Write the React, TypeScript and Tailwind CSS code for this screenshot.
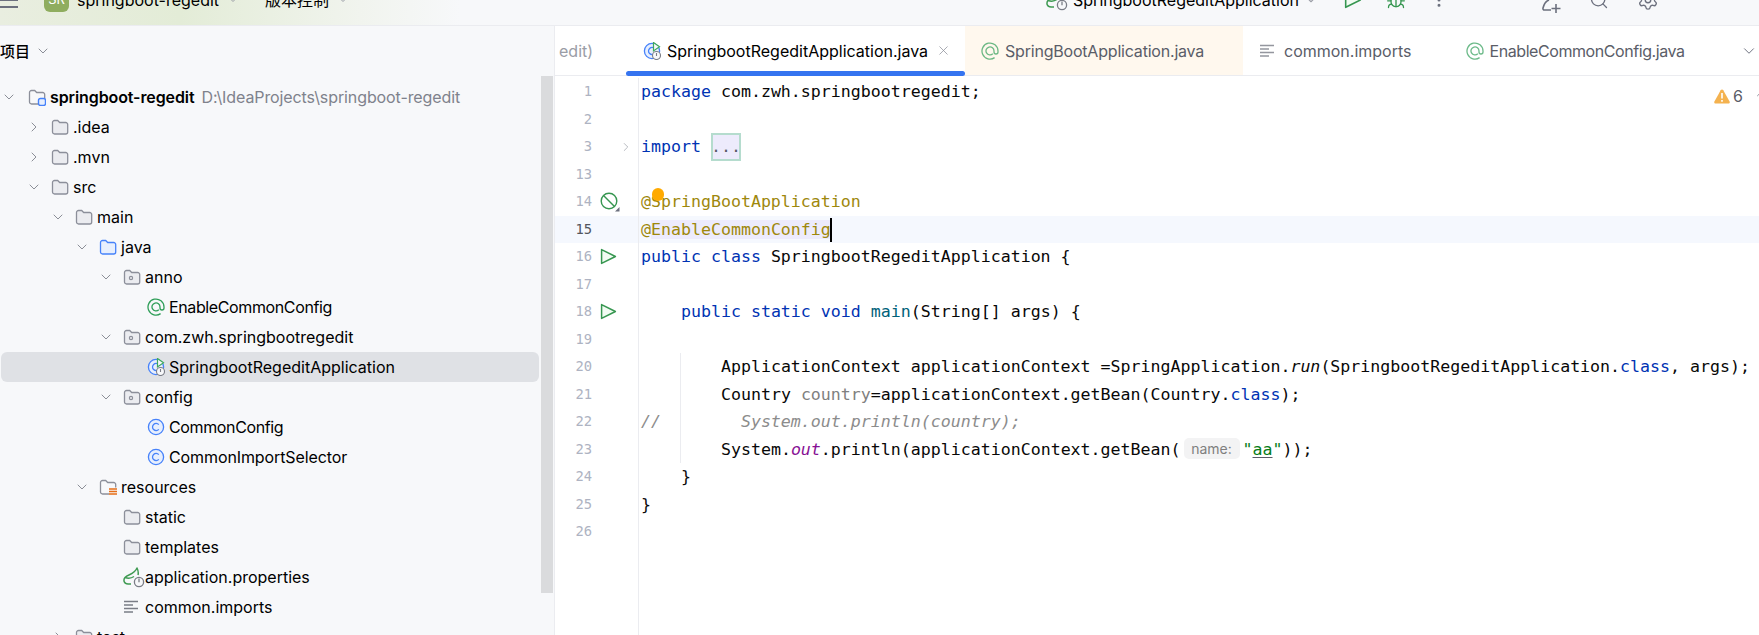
import type { ReactNode } from "react";
import { ChevronDown, ChevronRight, ChevronUp, Search, Bug, MoreVertical, Settings, X } from "lucide-react";

const mono = "font-['DejaVu_Sans_Mono',monospace]";
const sans = "font-['Inter','Noto_Sans_CJK_SC',sans-serif]";

function FolderIcon({ kind = "plain" }: { kind?: "plain" | "pkg" | "src" | "res" | "module" }) {
  const stroke = kind === "src" ? "#4682fa" : "#8c8f9a";
  const fill = kind === "src" ? "#e7effd" : "#ebecf0";
  return (
    <svg width="18" height="18" viewBox="0 0 18 18" className="shrink-0">
      <path
        d="M1.5 4.5a2 2 0 0 1 2-2h3.2l2 2h6a2 2 0 0 1 2 2v7.5a2 2 0 0 1-2 2H3.500a2 2 0 0 1-2-2z"
        fill={kind === "res" || kind === "module" ? "none" : fill}
        stroke={stroke}
        strokeWidth="1.3"
      />
      {kind === "pkg" && <circle cx="8" cy="10" r="1.6" fill="none" stroke={stroke} strokeWidth="1.2" />}
      {kind === "res" && (
        <g>
          <rect x="10" y="9.5" width="8" height="8" fill="#f7f8fa" />
          <path d="M10 11h8M10 13.5h8M10 16h8" stroke="#e66d17" strokeWidth="1.5" />
        </g>
      )}
      {kind === "module" && (
        <rect x="10.5" y="10.5" width="7" height="7" rx="2" fill="#e7effd" stroke="#4682fa" strokeWidth="1.4" />
      )}
    </svg>
  );
}

function ClassIcon({ run = false }: { run?: boolean }) {
  return (
    <svg width="18" height="18" viewBox="0 0 18 18" className="shrink-0">
      <circle cx="9" cy="9" r="7.6" fill="#e7effd" stroke="#4682fa" strokeWidth="1.3" />
      <path d="M11.8 6.6a3.6 3.6 0 1 0 0 4.8" fill="none" stroke="#4682fa" strokeWidth="1.3" />
      {run && (
        <g>
          <path d="M10.5 0.5l6 4.2-6 4.2z" fill="#f7f8fa" stroke="#3fa85d" strokeWidth="1.2" />
          <circle cx="13.5" cy="13.5" r="4" fill="#f7f8fa" stroke="#7a7d86" strokeWidth="1.1" />
          <path d="M13.5 11v3" stroke="#7a7d86" strokeWidth="1.1" />
        </g>
      )}
    </svg>
  );
}

function AtIcon({ faded = false }: { faded?: boolean }) {
  return (
    <svg width="18" height="18" viewBox="0 0 18 18" className={faded ? "shrink-0 opacity-70" : "shrink-0"}>
      <path
        d="M13.6 15.6A8 8 0 1 1 17 9v1a2 2 0 0 1-4 0V9a4 4 0 1 0-1.2 2.8"
        fill="none"
        stroke="#2f9e58"
        strokeWidth="1.3"
      />
    </svg>
  );
}

function TextIcon({ faded = false }: { faded?: boolean }) {
  return (
    <svg width="16" height="16" viewBox="0 0 16 16" className={faded ? "mr-[3px] shrink-0 opacity-80" : "shrink-0"}>
      <path d="M1 2.5h14M1 6h9M1 9.500h14M1 13h9" stroke="#7a7d86" strokeWidth="1.3" />
    </svg>
  );
}

function SpringIcon() {
  return (
    <svg width="22" height="22" viewBox="0 0 22 22" className="shrink-0">
      <path
        d="M8 18H5C1 18 0 14 2 11.500 5 8 11 9 14 2c1.500 3 1.500 5 1 7M2 11.500c3 1 6 1 9-1"
        fill="none"
        stroke="#3f9a52"
        strokeWidth="1.5"
        strokeLinejoin="round"
      />
      <circle cx="16" cy="16" r="4.600" fill="#f7f8fa" stroke="#7a7d86" strokeWidth="1.300" />
      <path d="M16 12.500v3.800" stroke="#7a7d86" strokeWidth="1.300" />
    </svg>
  );
}

function PlayIcon({ size = 17 }: { size?: number }) {
  return (
    <svg width={size} height={size} viewBox="0 0 16 16" className="shrink-0">
      <path d="M1.500 1.500l13 6.500-13 6.500z" fill="#f2fcf3" stroke="#369650" strokeWidth="1.400" strokeLinejoin="round" />
    </svg>
  );
}

type TreeItem = { level: number; label: string; icon: ReactNode; open?: boolean; selected?: boolean; tight?: string };

// the reference's hinted Inter runs narrower on the "Common..." names
const tree: TreeItem[] = [
  { level: 1, label: ".idea", icon: <FolderIcon />, open: false },
  { level: 1, label: ".mvn", icon: <FolderIcon />, open: false },
  { level: 1, label: "src", icon: <FolderIcon />, open: true },
  { level: 2, label: "main", icon: <FolderIcon />, open: true },
  { level: 3, label: "java", icon: <FolderIcon kind="src" />, open: true },
  { level: 4, label: "anno", icon: <FolderIcon kind="pkg" />, open: true },
  { level: 5, label: "EnableCommonConfig", icon: <AtIcon />, tight: "tracking-[-0.38px]" },
  { level: 4, label: "com.zwh.springbootregedit", icon: <FolderIcon kind="pkg" />, open: true },
  { level: 5, label: "SpringbootRegeditApplication", icon: <ClassIcon run />, selected: true },
  { level: 4, label: "config", icon: <FolderIcon kind="pkg" />, open: true },
  { level: 5, label: "CommonConfig", icon: <ClassIcon />, tight: "tracking-[-0.37px]" },
  { level: 5, label: "CommonImportSelector", icon: <ClassIcon />, tight: "tracking-[-0.1px]" },
  { level: 3, label: "resources", icon: <FolderIcon kind="res" />, open: true },
  { level: 4, label: "static", icon: <FolderIcon /> },
  { level: 4, label: "templates", icon: <FolderIcon /> },
  { level: 4, label: "application.properties", icon: <SpringIcon /> },
  { level: 4, label: "common.imports", icon: <TextIcon /> },
  { level: 2, label: "test", icon: <FolderIcon />, open: false },
];

const indent: Record<number, string> = {
  1: "pl-[25px]",
  2: "pl-[49px]",
  3: "pl-[73px]",
  4: "pl-[97px]",
  5: "pl-[121px]",
};

function TreeRow({ item }: { item: TreeItem }) {
  return (
    <div
      className={`flex h-[30px] shrink-0 items-center rounded-md ${indent[item.level]} ${
        item.selected ? "bg-[#dfe1e5]" : ""
      }`}
    >
      <span className="flex w-[25px] shrink-0 justify-start text-[#7a7d86]">
        {item.open === true && <ChevronDown size={16} strokeWidth={1.3} />}
        {item.open === false && <ChevronRight size={16} strokeWidth={1.3} />}
      </span>
      <span className="flex w-[22px] shrink-0 items-center">{item.icon}</span>
      <span className={`whitespace-nowrap text-[16px] text-[#000000] ${item.tight ?? ""}`}>{item.label}</span>
    </div>
  );
}

function Tab({
  label,
  icon,
  tint,
  active,
  tight,
}: {
  label: string;
  icon: ReactNode;
  tint?: boolean;
  active?: boolean;
  tight?: string;
}) {
  return (
    <div
      className={`relative flex h-full shrink-0 items-center gap-[6px] ${
        active ? "w-[339px] bg-white pl-[17px]" : tint ? "w-[278px] bg-[#fff8ee] pl-[16px]" : "pl-[16px]"
      }`}
    >
      {icon}
      <span className={`whitespace-nowrap text-[16px] ${tight ?? ""} ${active ? "text-black" : "text-[#5a5d68]"}`}>
        {label}
      </span>
      {active && (
        <>
          <X size={15} strokeWidth={1.2} className="ml-[2px] text-[#8c8f9a]" />
          <span className="absolute bottom-[-1px] left-0 right-0 h-[5px] rounded-full bg-[#3574f0]" />
        </>
      )}
    </div>
  );
}

const kw = "text-[#0033b3]";
const ann = "text-[#9e880d]";

type Line = { no: number; code?: ReactNode; gutter?: ReactNode; fold?: boolean; current?: boolean; guide?: boolean };

const lines: Line[] = [
  { no: 1, code: <><span className={kw}>package</span> com.zwh.springbootregedit;</> },
  { no: 2 },
  {
    no: 3,
    fold: true,
    code: (
      <>
        <span className={kw}>import</span>{" "}
        <span className="inline-block h-[28px] border-2 border-x-0 border-[#b5dcce] bg-[#edebfc] align-top leading-[24px] text-[#5a5d68] outline-2 -outline-offset-2 outline-[#b5dcce]">
          ...
        </span>
      </>
    ),
  },
  { no: 13 },
  {
    no: 14,
    gutter: (
      <svg width="20" height="20" viewBox="0 0 20 20" className="shrink-0">
        <circle cx="9" cy="9" r="7.800" fill="none" stroke="#369650" strokeWidth="1.400" />
        <path d="M3.500 3.500l11 11" stroke="#369650" strokeWidth="1.400" />
        <path d="M19.500 15v4.500H15z" fill="#6c707e" />
      </svg>
    ),
    code: (
      <span className="relative">
        <span className={ann}>@SpringBootApplication</span>
        <span className="absolute left-[11px] top-[-4px] h-[13px] w-[12px] rounded-full bg-[#ffaa00]" />
      </span>
    ),
  },
  {
    no: 15,
    current: true,
    code: (
      <span className={ann}>
        @<span className="bg-[#edebfc]">EnableCommonConfig</span>
        <span className="ml-[-1px] inline-block h-[24px] w-[2px] bg-black align-middle" />
      </span>
    ),
  },
  {
    no: 16,
    gutter: <PlayIcon />,
    code: <><span className={kw}>public class</span> SpringbootRegeditApplication {"{"}</>,
  },
  { no: 17 },
  {
    no: 18,
    gutter: <PlayIcon />,
    code: (
      <>
        {"    "}
        <span className={kw}>public static void</span> <span className="text-[#00627a]">main</span>(String[] args) {"{"}
      </>
    ),
  },
  { no: 19, guide: true },
  {
    no: 20,
    guide: true,
    code: (
      <>
        {"        "}ApplicationContext applicationContext =SpringApplication.<i>run</i>(SpringbootRegeditApplication.
        <span className={kw}>class</span>, args);
      </>
    ),
  },
  {
    no: 21,
    guide: true,
    code: (
      <>
        {"        "}Country <span className="text-[#808080]">country</span>=applicationContext.getBean(Country.
        <span className={kw}>class</span>);
      </>
    ),
  },
  {
    no: 22,
    guide: true,
    code: <i className="text-[#8c8c8c]">{"//        System.out.println(country);"}</i>,
  },
  {
    no: 23,
    guide: true,
    code: (
      <>
        {"        "}System.<i className="text-[#871094]">out</i>.println(applicationContext.getBean(
        <span className={`mx-[3px] inline-block h-[21px] w-[56px] rounded-[5px] bg-[#f3f3f4] text-center align-[1px] text-[14px] leading-[21px] text-[#7f7f7f] ${sans}`}>
          name:
        </span>
        <span className="text-[#067d17]">
          "<span className="underline decoration-[#5a5d68] underline-offset-2">aa</span>"
        </span>
        ));
      </>
    ),
  },
  { no: 24, code: <>{"    }"}</> },
  { no: 25, code: <>{"}"}</> },
  { no: 26 },
];

function EditorLine({ line }: { line: Line }) {
  return (
    <div className={`flex h-[27.5px] shrink-0 items-center ${line.current ? "bg-[#f5f8fe]" : ""}`}>
      <span
        className={`w-[37px] shrink-0 text-right text-[13.8px] ${mono} ${
          line.current ? "text-[#53565e]" : "text-[#aeb3c2]"
        }`}
      >
        {line.no}
      </span>
      <span className="flex w-[26px] shrink-0 items-center pl-[8px]">{line.gutter}</span>
      <span className="flex w-[21px] shrink-0 items-center self-stretch border-r border-[#ebecf0] pl-[1px] text-[#9a9da6]">
        {line.fold && <ChevronRight size={14} strokeWidth={1.2} />}
      </span>
      <div className={`relative ml-[2px] whitespace-pre text-[16.6px] leading-[27.5px] text-[#080808] ${mono}`}>
        {line.guide && <span className="absolute bottom-0 left-[39px] top-0 w-px bg-[#ebecf0]" />}
        {line.code}
      </div>
    </div>
  );
}

export default function App() {
  return (
    <div className={`flex h-[635px] w-[1759px] flex-col overflow-hidden bg-white ${sans}`}>
      {/* clipped title bar */}
      <header className="h-[26px] shrink-0 overflow-hidden border-b border-[#ebecf0] bg-[linear-gradient(90deg,#e9eee0_0px,#e3ecd7_180px,#f1f4ee_360px,#f7f8fa_460px)] text-[16px] text-black">
        <div className="-mt-[14px] flex h-[28px] items-center">
          <div className="flex w-[18px] flex-col gap-[5px]">
            <span className="h-[2px] bg-[#6c707e]" />
            <span className="h-[2px] bg-[#6c707e]" />
            <span className="h-[2px] bg-[#6c707e]" />
          </div>
          <span className="ml-[26px] flex h-[24px] w-[25px] items-center justify-center rounded-md bg-[#8fad5f] text-[13px] text-white">
            SR
          </span>
          <span className="ml-[8px]">springboot-regedit</span>
          <ChevronDown size={12} className="ml-[8px] text-[#9a9da6]" />
          <span className="ml-[26px]">版本控制</span>
          <ChevronDown size={12} className="ml-[8px] text-[#9a9da6]" />
          <span className="ml-auto flex items-center">
            <SpringIcon />
            <span className="ml-[5px]">SpringbootRegeditApplication</span>
            <ChevronDown size={14} className="ml-[5px] text-[#9a9da6]" />
            <span className="ml-[26px]"><PlayIcon size={18} /></span>
            <Bug size={20} strokeWidth={1.6} className="ml-[24px] text-[#369650]" />
            <MoreVertical size={18} className="ml-[24px] text-[#6c707e]" />
            <svg width="24" height="24" viewBox="0 0 24 24" className="ml-[90px] translate-y-[6px]" fill="none" stroke="#6c707e" strokeWidth="1.600">
              <path d="M11 6c-3 1-5 4-6 8-.3 1.200.4 2 1.500 2H13M18 10v9M13.500 14.500h9" />
            </svg>
            <Search size={20} strokeWidth={1.6} className="ml-[27px] text-[#6c707e]" />
            <Settings size={22} strokeWidth={1.5} className="ml-[28px] mr-[100px] text-[#6c707e]" />
          </span>
        </div>
      </header>

      <div className="flex min-h-0 flex-1">
        {/* project panel */}
        <aside className="flex w-[555px] shrink-0 flex-col border-r border-[#ebecf0] bg-[#f7f8fa]">
          <div className="flex h-[50px] shrink-0 items-center text-[15px] font-medium text-black">
            <span className="font-['Noto_Sans_CJK_SC',sans-serif]">项目</span>
            <ChevronDown size={16} strokeWidth={1.3} className="ml-[5px] text-[#7a7d86]" />
          </div>
          <div className="flex min-h-0 flex-1">
            <div className="min-w-0 flex-1 pl-px pr-[2px] pt-[6px]">
              <div className="flex h-[30px] items-center">
                <span className="flex w-[27px] shrink-0 text-[#7a7d86]">
                  <ChevronDown size={16} strokeWidth={1.3} />
                </span>
                <FolderIcon kind="module" />
                <span className="ml-[4px] whitespace-nowrap text-[16px] font-semibold tracking-[-0.1px] text-black">springboot-regedit</span>
                <span className="ml-[7px] whitespace-nowrap text-[16px] tracking-[-0.1px] text-[#7f828c]">D:\IdeaProjects\springboot-regedit</span>
              </div>
              {tree.map((item) => (
                <TreeRow key={item.label} item={item} />
              ))}
            </div>
            <div className="mb-[42px] w-[12px] shrink-0 bg-[#dadbdd]" />
            <div className="w-px shrink-0" />
          </div>
        </aside>

        {/* editor */}
        <main className="flex min-w-0 flex-1 flex-col">
          <div className="flex h-[50px] shrink-0 items-center border-b border-[#ebecf0]">
            <span className="w-[71px] shrink-0 pl-[4px] text-[16px] text-[#9a9da6]">edit)</span>
            <Tab active label="SpringbootRegeditApplication.java" icon={<ClassIcon run />} />
            <Tab tint label="SpringBootApplication.java" icon={<AtIcon faded />} tight="tracking-[-0.2px]" />
            <Tab label="common.imports" icon={<TextIcon faded />} />
            <span className="w-[38px] shrink-0" />
            <Tab label="EnableCommonConfig.java" icon={<AtIcon faded />} tight="tracking-[-0.43px]" />
            <ChevronDown size={18} strokeWidth={1.3} className="ml-[55px] text-[#6c707e]" />
          </div>
          <div className="relative flex min-h-0 flex-1 flex-col overflow-hidden pt-[2px]">
            <div className="absolute right-[16px] top-[8px] z-10 flex items-center gap-[3px] text-[16px] text-[#5a5d68]">
              <svg width="16" height="15" viewBox="0 0 16 15">
                <path d="M8 0.500c.6 0 1 .3 1.300.8l6.300 11.200c.5 1-.1 2-1.200 2H1.600C.5 14.500-.1 13.500.4 12.500L6.700 1.300C7 .8 7.400.5 8 .5z" fill="#f4b24f" />
                <path d="M8 4v5.500M8 11v1.800" stroke="#fff" strokeWidth="1.600" />
              </svg>
              6
            </div>
            <ChevronUp size={14} strokeWidth={1.3} className="absolute right-[-9px] top-[11px] text-[#6c707e]" />
            {lines.map((line) => (
              <EditorLine key={line.no} line={line} />
            ))}
            <div className="w-[84px] flex-1 border-r border-[#ebecf0]" />
          </div>
        </main>
      </div>
    </div>
  );
}
